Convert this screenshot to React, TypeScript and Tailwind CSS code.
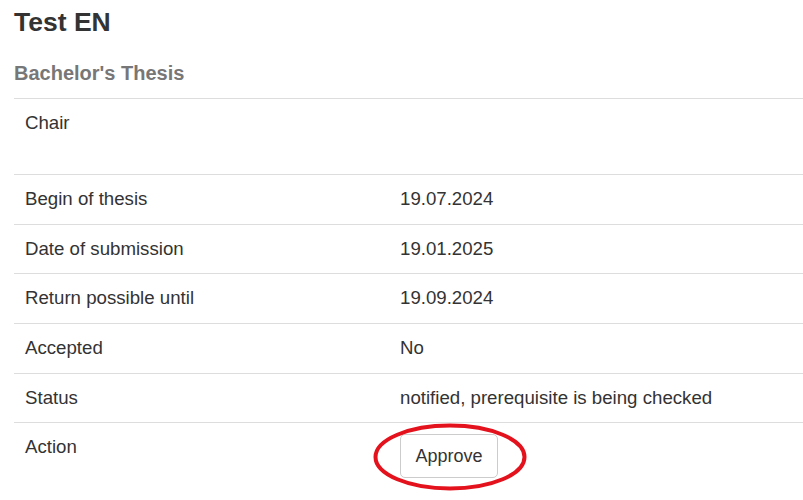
const rows: { label: string; value?: string; tall?: boolean; action?: boolean }[] = [
  { label: "Chair", tall: true },
  { label: "Begin of thesis", value: "19.07.2024" },
  { label: "Date of submission", value: "19.01.2025" },
  { label: "Return possible until", value: "19.09.2024" },
  { label: "Accepted", value: "No" },
  { label: "Status", value: "notified, prerequisite is being checked" },
  { label: "Action", action: true },
];

export default function App() {
  return (
    <main className="min-h-screen bg-white pl-[14px] text-[#333] font-['Liberation_Sans',Arial,sans-serif] overflow-hidden">
      <h3 className="pt-[6px] text-[26.5px] font-bold leading-[33px]">Test EN</h3>
      <h4 className="mt-[22px] text-[20px] font-bold leading-[24px] text-[#777]">
        Bachelor&apos;s Thesis
      </h4>

      <table className="mt-[13px] w-[900px] border-collapse text-[18.67px] leading-[26.67px]">
        <tbody>
          {rows.map((row) => (
            <tr key={row.label} className="border-t border-[#ddd]">
              <td
                className={`w-[386px] px-[11px] py-[11px] align-top ${
                  row.tall ? "h-[76px]" : ""
                }`}
              >
                {row.label}
              </td>
              <td className="px-0 py-[11px] align-top">
                {row.action ? (
                  <div className="relative inline-block">
                    <button className="h-[44px] w-[98px] rounded-[5px] border border-[#ccc] bg-white text-[18px] text-[#333]">
                      Approve
                    </button>
                    <svg
                      className="pointer-events-none absolute left-[-27px] top-[-11px]"
                      width="154"
                      height="68"
                      viewBox="0 0 154 68"
                    >
                      <ellipse
                        cx="77"
                        cy="34"
                        rx="74.5"
                        ry="31.5"
                        fill="none"
                        stroke="#e3121c"
                        strokeWidth="4"
                      />
                    </svg>
                  </div>
                ) : (
                  row.value
                )}
              </td>
            </tr>
          ))}
        </tbody>
      </table>
    </main>
  );
}
